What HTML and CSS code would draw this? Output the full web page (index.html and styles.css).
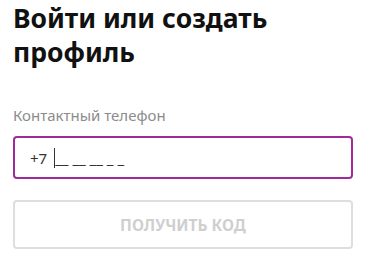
FILE: index.html
```html
<!DOCTYPE html>
<html lang="ru">

<head>
  <meta charset="utf-8">
  <title>Вход</title>
  <link rel="stylesheet" href="styles.css">
</head>

<body>
  <div class="login">
    <h1 class="title">Войти или создать профиль</h1>
    <label class="label" for="phone">Контактный телефон</label>
    <div class="phone">
      <span class="prefix">+7</span>
      <span class="caret"></span>
      <span class="mask">__ __ __ _ _</span>
    </div>
    <button type="button" class="submit" disabled>Получить код</button>
  </div>
</body>

</html>
```

FILE: styles.css
```css
body {
  margin: 0;
  background-color: #fff;
  font-family: "Noto Sans", "Open Sans", sans-serif;
}

.login {
  display: flex;
  flex-direction: column;
  width: 340px;
  padding: 0 13px;
}

.title {
  margin: 0;
  padding-top: 1px;
  width: 300px;
  font-size: 26.5px;
  line-height: 34px;
  font-weight: 700;
  color: #111;
}

.label {
  margin-top: 36px;
  font-size: 15px;
  line-height: 20px;
  color: #8c8c8c;
}

.phone {
  display: flex;
  align-items: center;
  box-sizing: border-box;
  height: 43px;
  margin-top: 11px;
  padding: 0 15px;
  border: 2px solid #a02a9c;
  border-radius: 4px;
  font-size: 15px;
  color: #333;
}

.caret {
  width: 1px;
  height: 20px;
  margin-left: 7px;
  background-color: #333;
}

.mask {
  color: #333;
}

.submit {
  box-sizing: border-box;
  height: 49px;
  margin-top: 21px;
  border: 2px solid #dedede;
  border-radius: 4px;
  background-color: #fff;
  font-family: inherit;
  font-size: 15.5px;
  font-weight: 700;
  text-transform: uppercase;
  color: #cfcfcf;
}
```
